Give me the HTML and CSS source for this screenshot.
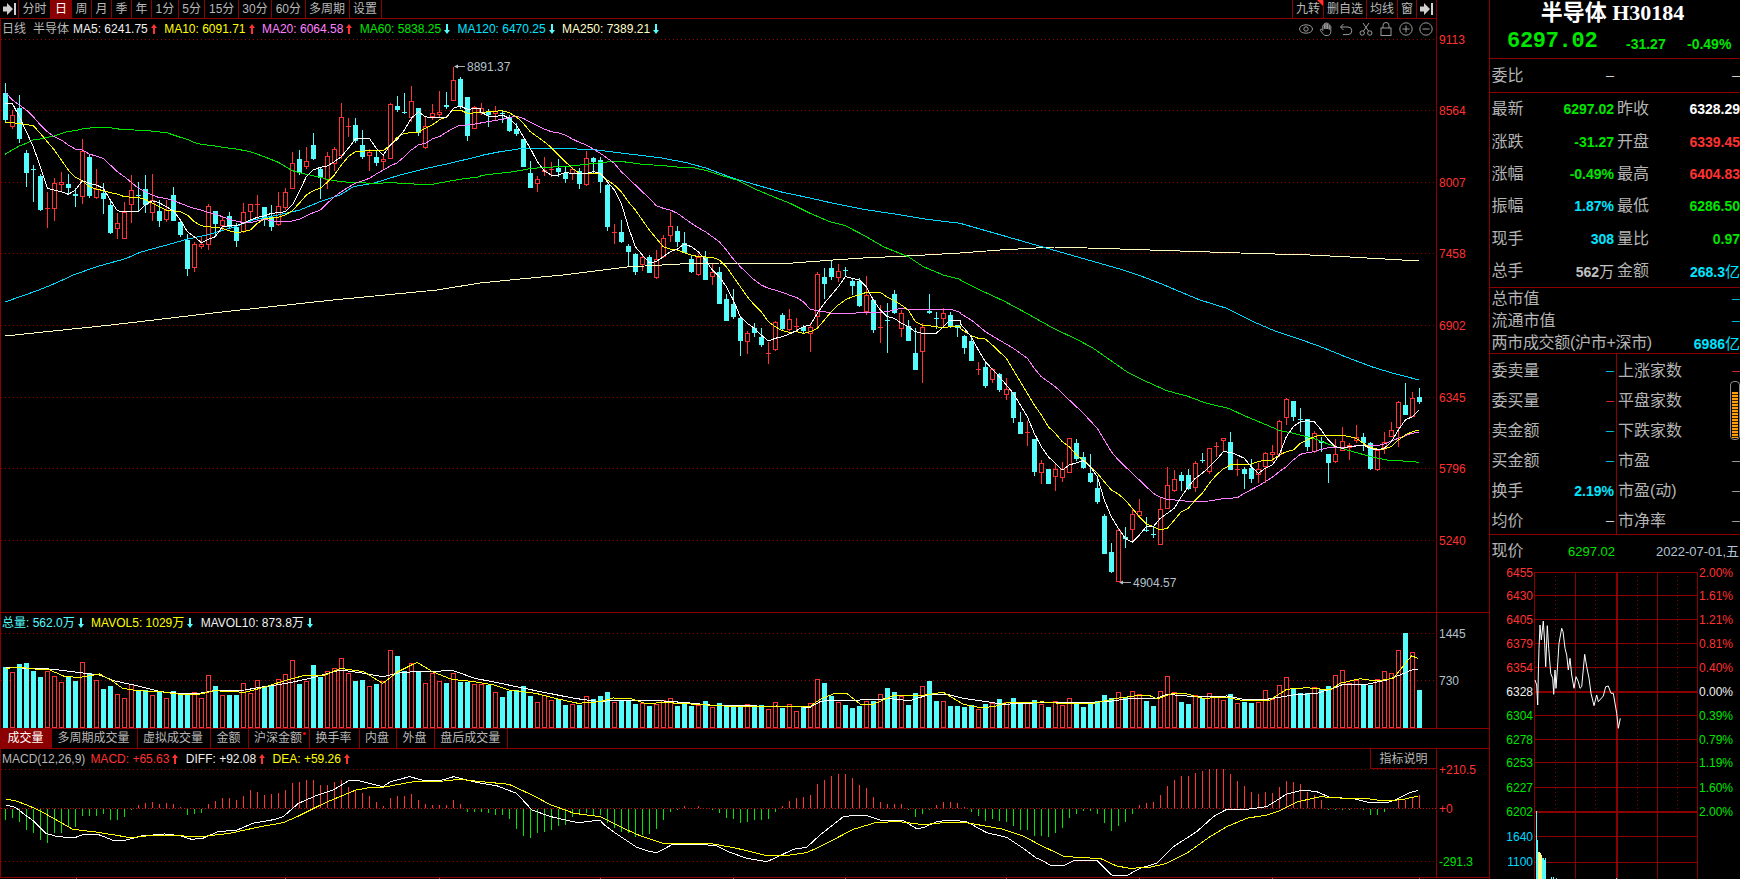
FILE: index.html
```html
<!DOCTYPE html>
<html lang="zh-CN">
<head>
<meta charset="utf-8">
<title>半导体 H30184</title>
<link rel="stylesheet" href="styles.css">
</head>
<body>
<svg class="defs" width="0" height="0" aria-hidden="true">
  <symbol id="arr-up" viewBox="0 0 6 10"><path d="M3 0L6 4H4V10H2V4H0Z"/></symbol>
  <symbol id="arr-down" viewBox="0 0 6 10"><path d="M2 0H4V6H6L3 10L0 6H2Z"/></symbol>
  <symbol id="arr-end" viewBox="0 0 13 12"><path d="M0 3.5H4V0L10 6L4 12V8.5H0ZM11 0H13V12H11Z"/></symbol>
</svg>
<div class="app">
  <main class="main">
    <nav class="toolbar">
      <span class="tb-btn tb-icon"><svg class="arr-end"><use href="#arr-end"/></svg></span>
      <span class="tb-btn">分时</span>
      <span class="tb-btn tb-active">日</span>
      <span class="tb-btn">周</span>
      <span class="tb-btn">月</span>
      <span class="tb-btn">季</span>
      <span class="tb-btn">年</span>
      <span class="tb-btn">1分</span>
      <span class="tb-btn">5分</span>
      <span class="tb-btn">15分</span>
      <span class="tb-btn">30分</span>
      <span class="tb-btn">60分</span>
      <span class="tb-btn">多周期</span>
      <span class="tb-btn">设置</span>
      <span class="tb-spacer"></span>
      <span class="tb-btn tb-tight tb-flag">九转</span>
      <span class="tb-btn tb-tight">删自选</span>
      <span class="tb-btn tb-tight">均线</span>
      <span class="tb-btn tb-tight">窗</span>
      <span class="tb-btn tb-icon"><svg class="arr-end"><use href="#arr-end"/></svg></span>
    </nav>

    <section class="pane pane-price">
      <div class="plot">
        <div class="legend">
          <span class="lg lg-grey lg-name">日线</span>
          <span class="lg lg-grey lg-stock">半导体</span>
          <span class="lg lg-white">MA5: 6241.75</span><svg class="arr red"><use href="#arr-up"/></svg>
          <span class="lg lg-yellow">MA10: 6091.71</span><svg class="arr red"><use href="#arr-up"/></svg>
          <span class="lg lg-violet">MA20: 6064.58</span><svg class="arr red"><use href="#arr-up"/></svg>
          <span class="lg lg-green">MA60: 5838.25</span><svg class="arr cyan"><use href="#arr-down"/></svg>
          <span class="lg lg-blue">MA120: 6470.25</span><svg class="arr cyan"><use href="#arr-down"/></svg>
          <span class="lg lg-cream">MA250: 7389.21</span><svg class="arr cyan"><use href="#arr-down"/></svg>
          <div class="tools">
            <svg class="tool" viewBox="0 0 14 14"><ellipse cx="7" cy="7" rx="6.5" ry="4.2"/><circle cx="7" cy="7" r="2.2"/></svg>
            <svg class="tool" viewBox="0 0 14 14"><path d="M3.8 8.5V3.8a.8.8 0 0 1 1.6 0V7M5.4 7V2a.8.8 0 0 1 1.6 0V7M7 7V1.6a.8.8 0 0 1 1.6 0V7M8.6 7V2.6a.8.8 0 0 1 1.6 0V7.5M10.2 7.5V4.4a.8.8 0 0 1 1.6 0V9.5c0 2.6-1.4 4-3.6 4H7c-1.6 0-2.4-.8-3.2-2L1.4 8.4c-.6-1 .7-1.8 1.5-1L3.8 8.5"/></svg>
            <svg class="tool" viewBox="0 0 14 14"><path d="M4.5 2L1.5 5L4.5 8M1.5 5H9a3.8 3.8 0 0 1 0 7.6H4"/></svg>
            <svg class="tool" viewBox="0 0 14 14"><circle cx="3.2" cy="11" r="2.2"/><circle cx="10.8" cy="11" r="2.2"/><path d="M4.4 9.2L10 1M9.6 9.2L4 1"/></svg>
            <svg class="tool" viewBox="0 0 14 14"><rect x="2" y="6" width="10" height="7.5"/><path d="M4 6V3.5a3 3 0 0 1 6 0V6"/></svg>
            <svg class="tool" viewBox="0 0 14 14"><circle cx="7" cy="7" r="6.2"/><path d="M7 3.5V10.5M3.5 7H10.5"/></svg>
            <svg class="tool" viewBox="0 0 14 14"><circle cx="7" cy="7" r="6.2"/><path d="M3.5 7H10.5"/></svg>
          </div>
        </div>
        <svg id="main-plot" class="chart" width="1435" height="573" viewBox="1 39 1435 573"></svg>
      </div>
      <svg id="main-axis" class="axis" width="52" height="593" viewBox="1437 19 52 593"></svg>
    </section>

    <section class="pane pane-vol">
      <div class="plot">
        <div class="legend">
          <span class="lg lg-cyan">总量: 562.0万</span><svg class="arr cyan"><use href="#arr-down"/></svg>
          <span class="lg lg-yellow">MAVOL5: 1029万</span><svg class="arr cyan"><use href="#arr-down"/></svg>
          <span class="lg lg-white">MAVOL10: 873.8万</span><svg class="arr cyan"><use href="#arr-down"/></svg>
        </div>
        <svg id="vol-plot" class="chart" width="1435" height="96" viewBox="1 632 1435 96"></svg>
      </div>
      <svg id="vol-axis" class="axis" width="52" height="115" viewBox="1437 613 52 115"></svg>
    </section>

    <nav class="tabs">
      <span class="tab tab-active">成交量</span>
      <span class="tab">多周期成交量</span>
      <span class="tab">虚拟成交量</span>
      <span class="tab">金额</span>
      <span class="tab tab-dot">沪深金额</span>
      <span class="tab">换手率</span>
      <span class="tab">内盘</span>
      <span class="tab">外盘</span>
      <span class="tab">盘后成交量</span>
    </nav>

    <section class="pane pane-macd">
      <div class="plot">
        <div class="legend">
          <span class="lg lg-grey lg-macd">MACD(12,26,9)</span>
          <span class="lg lg-red">MACD: +65.63</span><svg class="arr red"><use href="#arr-up"/></svg>
          <span class="lg lg-white">DIFF: +92.08</span><svg class="arr red"><use href="#arr-up"/></svg>
          <span class="lg lg-yellow">DEA: +59.26</span><svg class="arr red"><use href="#arr-up"/></svg>
          <span class="hint">指标说明</span>
        </div>
        <svg id="macd-plot" class="chart" width="1435" height="108" viewBox="1 768 1435 108"></svg>
      </div>
      <svg id="macd-axis" class="axis" width="52" height="128" viewBox="1437 749 52 128"></svg>
    </section>
    <svg id="time-ticks" class="ticks" width="1489" height="1" viewBox="0 878 1489 1"></svg>
  </main>

  <aside class="side">
    <header class="head">
      <h1 class="name">半导体 H30184</h1>
      <div class="price-row">
        <span class="price">6297.02</span>
        <span class="chg chg-a">-31.27</span>
        <span class="chg chg-b">-0.49%</span>
      </div>
    </header>

    <div class="wei">
      <span class="lbl wei-label">委比</span>
      <span class="dash wei-a">—</span>
      <span class="dash wei-b">—</span>
    </div>

    <div class="quotes">
      <span class="lbl">最新</span><span class="val v-green">6297.02</span><span class="lbl">昨收</span><span class="val v-white">6328.29</span>
      <span class="lbl">涨跌</span><span class="val v-green">-31.27</span><span class="lbl">开盘</span><span class="val v-red">6339.45</span>
      <span class="lbl">涨幅</span><span class="val v-green">-0.49%</span><span class="lbl">最高</span><span class="val v-red">6404.83</span>
      <span class="lbl">振幅</span><span class="val v-cyan">1.87%</span><span class="lbl">最低</span><span class="val v-green">6286.50</span>
      <span class="lbl">现手</span><span class="val v-cyan">308</span><span class="lbl">量比</span><span class="val v-green">0.97</span>
      <span class="lbl">总手</span><span class="val v-grey">562<small>万</small></span><span class="lbl">金额</span><span class="val v-cyan">268.3<small>亿</small></span>
    </div>

    <div class="market">
      <div class="m-row"><span class="lbl">总市值</span><span class="dash v-cyan">—</span></div>
      <div class="m-row"><span class="lbl">流通市值</span><span class="dash v-cyan">—</span></div>
      <div class="m-row"><span class="lbl lbl-tight">两市成交额(沪市+深市)</span><span class="val v-cyan">6986<small>亿</small></span></div>
    </div>

    <div class="split">
      <div class="col col-l">
        <div class="m-row"><span class="lbl">委卖量</span><span class="dash v-cyan">—</span></div>
        <div class="m-row"><span class="lbl">委买量</span><span class="dash v-red">—</span></div>
        <div class="m-row"><span class="lbl">卖金额</span><span class="dash v-cyan">—</span></div>
        <div class="m-row"><span class="lbl">买金额</span><span class="dash v-cyan">—</span></div>
        <div class="m-row"><span class="lbl">换手</span><span class="val v-cyan">2.19%</span></div>
        <div class="m-row"><span class="lbl">均价</span><span class="dash v-white">—</span></div>
      </div>
      <div class="col col-r">
        <div class="m-row"><span class="lbl">上涨家数</span><span class="dash v-red">—</span></div>
        <div class="m-row"><span class="lbl">平盘家数</span><span class="dash v-white">—</span></div>
        <div class="m-row"><span class="lbl">下跌家数</span><span class="dash v-green">—</span></div>
        <div class="m-row"><span class="lbl">市盈</span><span class="dash v-grey">—</span></div>
        <div class="m-row"><span class="lbl">市盈(动)</span><span class="dash v-grey">—</span></div>
        <div class="m-row"><span class="lbl">市净率</span><span class="dash v-grey">—</span></div>
        <div class="slider"><div class="slider-fill"></div></div>
      </div>
    </div>

    <div class="now">
      <span class="lbl">现价</span>
      <span class="now-price">6297.02</span>
      <span class="now-date">2022-07-01,五</span>
    </div>
    <svg id="mini-chart" class="mini" width="250" height="312" viewBox="1490 567 250 312"></svg>
  </aside>
</div>
<script src="chart.js"></script>
</body>
</html>
```
FILE: styles.css
```css
* { box-sizing: border-box; margin: 0; padding: 0; }
html, body { width: 1740px; height: 879px; overflow: hidden; background: #000; }
body { font: 12px/1 "Liberation Sans", "Noto Sans CJK SC", sans-serif; color: #b8b8b8; }
.defs { position: absolute; }
.app { display: flex; width: 1740px; height: 879px; }

.main { width: 1490px; flex: none; border-right: 1px solid #8b0000; display: flex; flex-direction: column; }

.toolbar { width: 1437px; height: 19px; display: flex; border-bottom: 1px solid #8b0000; border-right: 1px solid #8b0000; }
.tb-btn { display: flex; align-items: center; justify-content: center; padding: 0 3.5px 1px; border-right: 1px solid #8b0000; color: #b8b8b8; white-space: nowrap; }
.toolbar .tb-btn:last-child { border-right: 0; }
.tb-icon { width: 19px; padding: 0; }
.tb-tight { padding: 0 3px 1px; }
.tb-active { background: #8b0000; color: #fff; padding: 0 4px 1px; }
.tb-spacer { flex: 1; border-right: 1px solid #8b0000; }
.tb-flag { position: relative; }
.tb-flag::after { content: ""; position: absolute; top: 0; right: 0; border-top: 6px solid #ff3232; border-left: 6px solid transparent; }
.arr-end { width: 13px; height: 12px; fill: #d0d0d0; }

.pane { display: flex; border-bottom: 1px solid #8b0000; }
.pane-price { height: 594px; }
.pane-vol { height: 116px; }
.pane-macd { height: 129px; }
.plot { width: 1437px; flex: none; display: flex; flex-direction: column; border-left: 1px solid #8b0000; border-right: 1px solid #8b0000; }
.chart, .axis, .mini, .ticks { display: block; flex: none; }

.legend { height: 20px; display: flex; align-items: center; padding-left: 1px; position: relative; white-space: nowrap; }
.pane-vol .legend { height: 19px; }
.pane-macd .legend { height: 19px; }
.lg { margin-right: 3px; }
.lg-name { margin-right: 7px; }
.lg-stock { margin-right: 4px; }
.lg-macd { margin-right: 5px; }
.arr { width: 6px; height: 10px; margin-right: 7.4px; flex: none; }
.arr.red { fill: #ff3232; }
.arr.cyan { fill: #54fcfc; }
.lg-grey { color: #b8b8b8; }
.lg-white { color: #f0f0f0; }
.lg-yellow { color: #ffff00; }
.lg-violet { color: #ff80ff; }
.lg-green { color: #00e600; }
.lg-blue { color: #00e5ff; }
.lg-cream { color: #ffffc8; }
.lg-cyan { color: #54fcfc; }
.lg-red { color: #ff3232; }

.tools { position: absolute; right: 3px; top: 3px; display: flex; gap: 6px; }
.tool { width: 14px; height: 14px; fill: none; stroke: #9c9c9c; stroke-width: 1; }

.hint { position: absolute; top: 0; right: 0; height: 20px; width: 66px; display: flex; align-items: center; justify-content: center; border-left: 1px solid #8b0000; border-bottom: 1px solid #8b0000; color: #b8b8b8; }

.tabs { height: 20px; display: flex; border-bottom: 1px solid #8b0000; }
.tab { display: flex; align-items: center; padding: 0 7px 1px 5.5px; border-right: 1px solid #8b0000; color: #b8b8b8; position: relative; white-space: nowrap; }
.tab-active { background: #8b0000; color: #fff; padding: 0 7.5px 1px; }
.tab-dot::after { content: ""; position: absolute; top: 3px; right: 3px; width: 3px; height: 3px; border-radius: 50%; background: #ff0000; }

/* chart classes */
.fill-up { fill: #ff3232; }
.fill-down { fill: #54fcfc; }
.fill-green { fill: #00e600; }
.hollow { fill: #000; stroke: #ff3232; stroke-width: 1; }
.crisp { shape-rendering: crispEdges; }
.grid { stroke: #9a0000; stroke-width: 1; stroke-dasharray: 1 3; shape-rendering: crispEdges; }
.grid-zero { stroke: #e00000; stroke-width: 1; stroke-dasharray: 1 2; shape-rendering: crispEdges; }
.ln { fill: none; stroke-width: 1; shape-rendering: crispEdges; }
.ln-white { stroke: #fff; }
.ln-yellow { stroke: #ffff00; }
.ln-violet { stroke: #ff80ff; }
.ln-green { stroke: #00e600; }
.ln-blue { stroke: #00d8ff; }
.ln-cream { stroke: #ffffc0; }
.ln-mark { stroke: #a8a8a8; }
.txt { font: 12px "Liberation Sans", sans-serif; dominant-baseline: central; }
.t-red { fill: #ff3232; }
.t-green { fill: #00e600; }
.t-white { fill: #f0f0f0; }
.t-grey { fill: #b4c0cc; }
.t-cyan { fill: #00d8ff; }
.m-line { stroke: #8b0000; stroke-width: 1; shape-rendering: crispEdges; }
.m-thick { stroke: #8b0000; stroke-width: 2; shape-rendering: crispEdges; }
.m-dot { stroke: #8b0000; stroke-width: 1; stroke-dasharray: 1 3; shape-rendering: crispEdges; }
.m-price { fill: none; stroke: #fff; stroke-width: 1; }
.m-vol { stroke: #54fcfc; stroke-width: 1; shape-rendering: crispEdges; }
.m-vol-y { stroke: #ffff90; stroke-width: 1; shape-rendering: crispEdges; }

/* side panel */
.side { flex: 1; min-width: 0; display: flex; flex-direction: column; overflow: hidden; }
.head { height: 59px; border-bottom: 1px solid #8b0000; }
.name { height: 25px; padding-top: 1px; text-align: center; font: 700 22px/24px "Liberation Serif", "Noto Sans CJK SC", serif; color: #fff; padding-right: 5px; }
.price-row { display: flex; align-items: center; height: 33px; position: relative; }
.price { margin-left: 17px; font: 700 22px/1 "Liberation Mono", monospace; letter-spacing: -.3px; color: #00e600; }
.chg { font: 700 14px/1 "Liberation Sans", sans-serif; color: #00e600; position: absolute; top: 12px; }
.chg-a { left: 136px; }
.chg-b { left: 197px; }

.lbl { font-size: 16px; line-height: 1; color: #b4b4b4; white-space: nowrap; }
.lbl-tight { letter-spacing: -.3px; }
.val { font: 700 14px/1 "Liberation Sans", "Noto Sans CJK SC", sans-serif; text-align: right; white-space: nowrap; }
.val small { font-size: 15px; font-weight: 400; }
.dash { font: 700 8px/1 "Liberation Sans", sans-serif; }
.v-green { color: #00e600; }
.v-red { color: #ff3232; }
.v-white { color: #fff; }
.v-cyan { color: #00e5ff; }
.v-grey { color: #c0c0c0; }

.wei { height: 34px; border-bottom: 1px solid #8b0000; display: flex; align-items: center; padding-left: 1.5px; position: relative; }
.wei-a, .wei-b { position: absolute; top: 13px; color: #fff; }
.wei-a { left: 116px; }
.wei-b { right: 0; }

.quotes { height: 195px; border-bottom: 1px solid #8b0000; display: grid; grid-template-columns: 41.5px 81px 36px 90px; grid-auto-rows: 32.4px; padding-left: 1.5px; align-items: center; }
.quotes .lbl:nth-child(4n+3) { margin-left: 3px; }

.market { height: 66px; border-bottom: 1px solid #8b0000; display: grid; grid-auto-rows: 22px; padding: 0 0 0 1.5px; }
.m-row { display: flex; align-items: center; justify-content: space-between; }

.split { height: 181px; border-bottom: 1px solid #8b0000; display: flex; padding-top: 2px; position: relative; }
.col { display: grid; grid-auto-rows: 30px; }
.col-l { width: 127px; border-right: 1px solid #8b0000; padding: 2px 2px 0 1.5px; margin-top: -2px; }
.col-r { flex: 1; padding-left: 1px; }
.slider { position: absolute; left: 240px; top: 27px; width: 10px; height: 59px; border: 1px solid #8a8a8a; border-radius: 4px; background: #000; padding: 10px 1px 1px; }
.slider-fill { height: 100%; background: repeating-linear-gradient(#ff9d0a 0 2px, #3a2000 2px 3px); }

.now { height: 32px; display: flex; align-items: center; padding-left: 1.5px; position: relative; }
.now-price { position: absolute; left: 78px; font-size: 13px; color: #00e600; }
.now-date { position: absolute; left: 166px; font-size: 13px; color: #b4c4d4; white-space: nowrap; }
```
FILE: chart.js
```js
const NS = 'http://www.w3.org/2000/svg';
function add(svg, tag, attrs, text) {
  const el = document.createElementNS(NS, tag);
  for (const k in attrs) el.setAttribute(k, attrs[k]);
  if (text !== undefined) el.textContent = text;
  svg.appendChild(el);
  return el;
}
function seg(x0, y0, sx, str) {
  return str.trim().split(/\s+/).map(p => {
    const [a, b] = p.split(',').map(Number);
    return [x0 + a / sx, y0 + b / 3];
  });
}
function poly(svg, cls, pts) {
  add(svg, 'polyline', { class: 'ln ' + cls, points: pts.map(p => p[0].toFixed(1) + ',' + p[1].toFixed(1)).join(' ') });
}
const $ = id => document.getElementById(id);
const xOf = i => 5 + 7 * i;

/* ---- candles: type hi top bot lo, in 3x units from each y origin ---- */
const candleGroups = [
  [60, `c 68 98 180 185|r 150 165 200 207|c 105 145 237 248|c 270 279 339 380|c 315 327 330 425|c 342 348 450 452|r 396 445 448 503|r 355 370 448 483|r 335 365 376 392|c 343 372 384 405|c 383 402 408 440|r 238 274 410 432|c 285 291 408 415|r 327 387 413 418|c 370 399 417 462|c 420 435 520 522|r 460 490 508 537|r 427 456 536 538|r 346 390 434 490|c 365 405 409 455|c 345 388 434 460|r 342 421 458 483|c 420 453 483 500|r 420 450 480 485|c 380 406 483 483|c 478 486 526 530|c 522 539 627 648|r 545 552 624 636|r 530 553 560 567|r 433 439 554 570|c 452 453 492 530|r 470 481 497 510|c 456 468 500 505|c 490 502 543 560|r 428 455 516 518|r 432 433 455 490|r 405 433 435 478|c 440 441 480 498|c 435 472 500 513|r 397 439 494 497|r 385 397 445 450|r 275 310 386 388|c 270 297 340 345|r 262 304 320 327|c 220 255 297 300|c 322 327 355 417|r 275 289 360 387|r 262 268 311 333|r 130 172 289 296|r 175 198 200 230|c 175 195 242 248|c 210 255 290 297|r 268 275 287 333|c 270 291 309 318|r 282 296 307 330|r 130 132 296 296|c 108 138 150 156|c 98 156 160 162|r 78 124 175 186|c 144 144 220 228|r 170 199 263 268|r 132 160 172 180|r 93 157 166 175|c 95 135 140 148|r 20 60 122 122|c 52 57 138 148|c 112 112 228 242|r 137 140 206 207`],
  [60, `r 130 145 158 165|c 148 156 166 200|r 138 153 163 183|c 150 158 162 190|c 165 175 213 216|c 190 207 222 228|c 237 237 321 321|c 303 339 384 384|r 348 357 373 395|r 291 330 336 347|r 305 328 331 350|c 297 323 336 350|c 318 338 356 368|r 320 328 342 360|c 325 332 372 386|r 274 295 375 377|c 292 294 305 340|c 292 300 366 400|c 372 374 500 512|r 492 516 519 552|c 480 516 546 548|c 552 558 576 622|c 578 582 636 645|r 583 592 614 633|c 585 590 640 640|r 570 598 654 656|r 525 535 590 595|r 455 499 527 545|c 498 514 546 560|c 515 548 578 580|c 585 598 636 640|r 582 592 646 648|c 574 590 659 660|r 610 636 650 675|c 622 636 732 732|c 702 717 782 782|c 687 733 772 778|c 772 774 844 887|r 812 820 845 882|c 790 804 819 832|c 805 832 856 862|r 845 880 883 912|r 782 785 870 872|c 760 766 808 810|r 747 776 810 812|r 775 797 800 815|c 795 800 813 820|r 790 802 823 876|r 635 643 770 800|c 625 652 671 718|c 601 625 650 660|r 612 634 653 666|c 620 630 634 650|c 655 664 678 705|c 655 662 738 742|r 648 706 756 764|c 718 720 810 818|r 735 800 803 849|c 730 779 782 878|c 690 702 760 762|r 750 760 808 830|c 780 797 843 843|c 805 879 930 930|r 790 802 875 969|c 702 752 758 762|c 757 774 777 806|r 745 760 778 798|c 755 766 800 805|c 795 795 803 830`],
  [270, `c 195 197 234 252|c 195 213 273 273|r 276 297 301 316|c 280 291 348 353|r 295 297 330 338|c 310 312 360 365|r 325 358 374 390|c 365 366 445 458|c 427 456 491 492|r 454 486 489 527|c 508 508 606 617|r 570 580 610 641|c 597 598 641 641|r 580 598 620 662|r 576 598 623 635|r 505 505 608 610|c 508 520 568 572|c 546 562 594 597|c 552 609 636 640|c 628 655 696 702|c 732 737 851 851|c 820 846 906 910|r 778 779 935 937|c 770 800 808 833|r 716 733 781 815|r 687 722 737 744|c 742 779 782 786|c 770 791 794 804|r 682 718 824 826|r 591 646 716 718|r 600 628 662 665|c 605 616 632 664|c 597 616 658 660|r 574 580 655 665|c 549 570 573 580|r 535 535 607 613|r 515 528 531 562|r 503 505 513 545|c 487 516 599 600|r 568 596 599 618|c 590 598 612 656|c 568 594 627 640|r 578 596 616 640|r 547 548 590 638|r 526 547 556 575|r 450 454 555 560|r 385 388 445 465|c 393 394 441 452|c 415 448 451 485|c 447 448 530 543|r 484 488 547 548|c 500 513 520 545|c 551 553 578 640|r 508 551 577 578|r 472 512 542 543|r 520 526 533 570|r 465 500 513 520|c 490 502 518 544|c 516 520 598 600|r 540 541 601 602|r 487 516 535 552|r 457 479 500 500|r 392 397 475 530|c 340 406 434 435|r 367 385 440 442|c 355 381 396 402`]
];

/* moving averages */
const mainLines = {
  'ln-cream': [[5,336],[111,325],[222,312],[333,300],[437,290],[480,283],[520,279],[563,275],[603,270],[627,267],[680,264],[720,263],[793,263],[833,260],[863,258],[907,256],[960,253],[1000,250],[1054,247],[1120,249],[1180,251],[1240,253],[1310,255],[1350,257],[1419,261]],
  'ln-blue': [[5,302],...seg(0,60,3,'117,690 170,668 220,645 290,620 380,595 420,577 500,555 560,538 620,525 700,502 760,480 820,468 900,450 960,425 1020,405 1060,380 1120,370 1200,345 1280,325 1350,310 1440,288'),
    ...seg(480,60,3,'0,287 60,275 130,265 200,265 290,267 350,270 430,280 540,293 620,308 680,325 760,355 840,378 900,395 980,412 1060,430 1150,448 1250,463 1340,478 1440,490'),
    ...seg(960,270,3,'0,-118 490,0 540,17 600,40 660,65 720,90 800,115 880,155 950,185 1020,208 1090,233 1160,262 1240,292 1300,310 1378,330').slice(1)],
  'ln-green': [...seg(0,60,3,'15,283 37,270 58,258 79,250 100,240 121,237 142,232 163,228 205,214 226,212 247,207 289,202 331,203 361,208 403,210 445,212 500,218 541,232 562,238 583,248 604,253 646,258 667,262 709,267 751,275 793,290 835,307 877,332 919,343 961,352 982,358 1024,365 1066,368 1129,370 1171,368 1213,370 1255,373 1297,373 1339,365 1381,358 1440,350'),
    ...seg(480,60,3,'0,347 40,342 100,335 145,327 190,322 250,320 320,313 390,305 430,305 480,312 560,318 600,322 640,323 680,332 720,345 770,360 820,385 880,410 930,430 990,460 1050,485 1096,497 1150,525 1210,560 1285,590 1330,620 1390,645 1440,658'),
    ...seg(960,270,3,'0,30 60,60 130,92 200,130 280,175 350,208 400,235 450,270 500,305 560,335 620,362 680,378 740,400 805,415 860,440 920,465 960,482 1000,490 1060,505 1120,528 1180,545 1240,562 1285,571 1330,573 1378,577')],
  'ln-violet': [...seg(0,60,3,'15,95 37,120 58,135 79,150 100,170 121,195 142,215 163,230 184,240 205,255 226,267 247,270 268,282 310,295 331,315 352,335 373,350 394,367 415,385 436,395 457,405 478,413 499,415 520,422 541,430 562,438 583,445 604,450 625,457 646,462 667,470 688,478 709,483 730,488 751,488 772,483 793,478 814,482 835,485 856,483 877,483 898,478 919,467 940,458 961,450 982,430 1003,410 1024,395 1045,382 1066,370 1087,363 1108,355 1129,342 1150,330 1171,318 1192,308 1213,290 1234,270 1255,255 1276,250 1297,237 1318,230 1339,217 1360,205 1381,195 1402,195 1440,190'),
    ...seg(480,60,3,'0,188 25,185 67,178 109,168 130,175 151,187 172,197 193,207 214,215 235,218 256,225 277,237 298,247 319,255 340,267 361,280 382,295 403,310 424,335 445,355 466,375 487,395 508,415 529,437 550,445 571,450 592,460 613,475 634,490 655,503 676,515 697,530 718,545 739,570 760,597 781,620 802,640 823,660 844,675 865,685 886,690 907,697 928,705 949,712 970,725 991,748 1012,752 1033,755 1054,760 1117,760 1159,757 1201,757 1222,755 1243,750 1264,745 1285,748 1348,750 1411,748 1440,757'),
    ...seg(960,270,3,'0,130 34,150 55,167 76,185 118,210 160,235 202,265 223,295 244,320 286,350 328,390 370,430 412,475 433,510 454,545 475,570 496,590 517,610 538,630 559,650 580,670 601,682 622,688 685,694 748,693 790,686 832,683 853,670 895,648 937,622 958,605 979,590 1000,570 1021,553 1042,548 1063,545 1084,538 1105,533 1147,533 1189,527 1210,527 1252,527 1273,522 1294,513 1315,505 1336,497 1357,490 1378,487')],
  'ln-yellow': [...seg(0,60,3,'15,187 58,190 100,197 121,220 142,245 163,270 184,300 205,330 226,352 247,362 268,380 289,387 310,392 331,398 352,402 373,410 415,413 436,418 457,430 478,440 499,450 541,455 562,465 583,485 604,497 625,500 667,505 688,512 709,518 730,515 751,510 772,490 793,477 835,472 856,465 877,452 898,430 919,405 940,392 961,385 982,367 1003,345 1024,315 1045,290 1066,275 1108,272 1150,272 1171,255 1192,232 1213,220 1255,217 1276,205 1297,195 1318,180 1339,170 1360,150 1381,150 1402,160 1440,158'),
    ...seg(480,60,3,'0,158 25,155 67,152 88,158 109,170 130,190 151,215 172,230 193,245 214,263 235,285 256,305 277,325 298,340 361,342 382,360 403,375 424,395 445,425 466,450 487,480 508,510 529,535 550,560 571,567 592,570 613,578 634,585 655,590 697,592 718,600 739,620 760,650 781,680 802,710 823,735 844,755 865,785 886,800 907,812 928,817 949,815 970,820 991,815 1012,805 1033,780 1054,755 1075,735 1096,720 1117,710 1138,705 1159,697 1201,697 1222,712 1243,722 1264,735 1285,750 1306,785 1327,795 1348,797 1369,800 1390,803 1411,800 1440,800'),
    ...seg(960,270,3,'0,175 34,197 55,205 76,207 97,225 118,245 139,265 160,300 181,335 202,370 223,405 244,435 265,470 286,490 307,515 328,530 349,555 370,570 391,590 412,610 433,635 454,660 475,672 496,690 517,715 538,740 559,762 580,770 601,780 622,775 643,750 664,725 685,715 706,690 727,670 748,640 769,615 790,597 811,585 853,582 874,582 895,575 916,570 937,570 958,555 979,545 1000,540 1021,520 1042,510 1063,500 1084,495 1147,495 1168,500 1189,505 1210,520 1231,532 1252,537 1273,537 1294,530 1315,510 1336,495 1357,485 1378,480')],
  'ln-white': [...seg(0,60,3,'15,130 37,130 58,170 79,215 100,260 121,320 142,385 163,390 184,395 205,403 226,390 247,362 268,370 289,375 310,385 331,420 352,452 373,455 415,455 436,435 457,422 478,428 499,440 520,452 541,480 562,515 583,530 604,548 625,538 646,530 667,500 688,497 709,497 730,490 751,480 772,472 793,468 814,460 835,458 856,455 877,435 898,395 919,350 940,330 961,322 982,318 1003,305 1024,290 1045,265 1066,237 1108,235 1129,265 1150,285 1171,255 1192,238 1213,210 1234,175 1255,155 1276,170 1297,173 1339,173 1360,145 1381,138 1402,148 1440,145'),
    ...seg(480,60,3,'0,155 25,168 46,170 67,165 88,175 109,195 130,230 151,265 172,305 193,333 214,345 235,345 256,338 277,340 298,342 319,340 340,335 361,340 382,365 403,390 424,430 445,500 466,560 487,585 508,608 529,605 550,590 571,575 592,568 613,552 634,560 655,575 676,600 697,630 718,650 739,680 760,720 781,770 802,790 823,805 844,825 865,843 886,835 907,830 928,822 949,812 970,800 991,795 1012,760 1033,730 1054,705 1075,680 1096,650 1117,655 1138,660 1159,680 1180,720 1201,750 1222,770 1243,775 1264,790 1285,800 1306,815 1327,820 1348,820 1369,820 1390,800 1411,780 1440,780'),
    ...seg(960,270,3,'0,160 34,200 55,240 76,275 118,320 160,370 181,405 202,440 223,490 244,530 265,560 286,580 307,600 328,585 370,572 391,590 412,620 433,690 454,740 475,775 496,805 517,817 538,795 559,770 580,770 601,745 622,730 643,715 664,680 685,650 706,625 727,610 748,590 769,570 790,545 811,547 832,555 853,565 874,590 895,610 916,595 937,585 958,555 979,500 1000,470 1021,455 1042,452 1063,455 1084,480 1105,510 1126,530 1147,535 1168,530 1189,528 1210,525 1231,535 1252,540 1273,535 1294,515 1315,480 1336,450 1357,440 1378,420')]
};

/* volume: type + top (3x units from y=600) */
const volBars = ('c200 r216 c192 c189 c212 c230 r213 r229 r246 c232 c243 r187 c220 r240 c267 c258 r283 r295 r252 c270 c270 r285 c275 r294 c273 c280 c282 r277 r294 r226 c258 r285 c285 c285 r250 r280 r240 c258 c256 r238 r223 r181 c252 r243 c195 c232 r214 r205 r175 r220 c243 c240 r259 c252 r243 r151 c168 c213 r190 c213 r250 r220 r243 c249 r220 c246 c246 r252 r252 c255 r276 c291 c272 c270 c258 c288 r306 r285 r300 c297 c315 r312 c315 r289 ' +
  'c297 c288 c276 r306 c300 c300 c312 r309 c318 r311 r301 r295 c318 c312 c318 r315 c303 r321 c309 c315 c321 c318 r312 c318 c315 r327 r307 c323 r313 r333 c321 r310 r238 c249 c288 r306 c315 c324 c318 r304 c303 r283 c264 c276 r289 c315 c279 r258 c243 c303 r304 c318 c318 c321 c316 r327 c312 r309 c297 r307 c294 c309 r310 c300 ' +
  'r312 c320 r304 r315 r295 c310 c320 c310 c303 c285 c294 r277 c292 r273 r283 c303 c318 r273 r229 r277 c306 c312 r285 c294 r280 r288 r300 c282 r310 c306 c309 r306 r271 r296 r256 r232 c265 c279 c279 r262 c268 c258 r226 r211 r250 r240 c253 c255 r238 r213 r219 r151 c99 r157 c270').split(' ');

const volWhite = [...seg(0,600,2.613,'15,203 100,205 140,208 210,218 260,225 300,243 350,255 420,275 470,280 520,280 560,272 640,270 680,262 750,250 810,235 890,210 950,220 1000,230 1050,217 1120,214 1185,212 1240,235 1300,248 1400,272 1500,295 1568,305'),
  ...seg(590,600,3,'60,302 210,302 290,308 360,315 440,315 500,318 560,318 660,322 690,305 720,300 810,300 900,296 960,302 1020,283 1070,283 1120,295 1190,305 1240,313 1350,308'),
  ...seg(1040,600,3,'0,308 120,308 200,305 260,297 350,295 380,283 440,288 490,290 560,288 610,298 680,298 760,285 830,280 880,265 910,253 980,253 1040,240 1080,225 1120,208 1135,210')];
const volYellow = [...seg(0,600,2.613,'15,205 50,202 100,208 130,210 170,230 210,232 260,222 290,240 320,265 360,272 420,275 470,283 520,283 560,272 640,277 690,262 750,240 800,225 850,225 890,205 950,215 1000,250 1040,215 1090,187 1130,215 1180,238 1240,245 1290,255 1330,270 1400,280 1450,295 1510,310 1568,305'),
  ...seg(590,600,3,'70,294 125,297 165,310 230,308 270,310 350,315 440,320 560,318 660,320 690,298 730,282 770,280 810,312 850,313 910,287 990,287 1060,277 1120,313 1170,323 1210,320 1250,308 1350,308'),
  ...seg(1040,600,3,'0,305 60,310 160,310 230,295 290,287 330,287 350,297 400,280 440,282 490,295 560,292 610,302 690,300 740,268 800,263 870,270 900,250 960,236 1010,243 1060,235 1115,167 1135,176')];

/* MACD bar ends, 3x units from y=600; the zero line sits at 625 */
const macdBars = [660,655,665,690,700,720,728,700,700,680,680,648,648,648,642,660,660,650,628,615,610,606,612,610,612,622,645,642,640,612,603,595,595,600,587,570,575,585,582,578,570,548,545,540,540,555,555,545,540,560,570,578,588,605,618,595,588,588,582,600,612,615,616,615,600,612,635,635,635,640,645,645,658,688,708,714,700,695,690,678,675,650,640,640,
  645,645,668,683,695,700,710,705,702,687,660,636,628,618,624,618,625,628,638,654,656,668,666,660,660,657,635,618,603,594,591,585,552,540,528,522,522,534,555,564,590,606,612,612,612,628,651,642,628,615,606,606,609,622,636,648,663,657,663,666,678,690,690,708,708,711,
  700,684,655,642,633,632,642,668,692,677,665,642,615,608,605,585,558,540,528,528,520,512,507,507,507,522,543,557,575,582,575,578,560,543,547,552,575,585,600,628,628,628,628,625,628,644,645,636,625,600,600,590,585];

const macdWhite = [...seg(0,600,2.613,'15,615 40,622 60,640 90,665 120,700 150,710 195,713 220,703 260,705 300,723 330,720 370,708 430,702 470,707 500,718 530,715 570,695 620,690 660,670 720,658 740,650 780,610 830,585 870,570 910,543 930,540 1000,560 1020,545 1070,530 1110,542 1150,542 1185,530 1250,548 1300,558 1350,580 1390,630 1440,650 1510,668 1568,660'),
  ...seg(590,600,3,'40,672 70,695 100,715 140,742 170,752 200,758 250,732 330,732 380,738 420,757 470,775 530,785 560,772 610,748 650,742 690,705 760,650 800,645 830,647 870,660 940,662 980,686 1000,683 1040,665 1080,660 1130,665 1190,698 1250,712 1300,745 1340,775'),
  ...seg(1040,600,3,'0,778 30,795 70,797 100,783 170,780 215,825 260,827 300,805 350,790 400,740 470,695 520,650 560,628 620,628 680,620 740,582 790,570 830,575 870,592 940,596 990,608 1040,608 1070,598 1110,578 1135,571')];
const macdYellow = [...seg(0,600,2.613,'15,598 40,602 70,615 100,630 140,655 190,688 250,696 300,705 340,713 400,706 470,707 520,711 600,700 680,680 740,668 780,648 850,608 930,570 960,564 1000,562 1080,545 1160,543 1200,538 1240,543 1330,553 1390,585 1440,615 1500,640 1568,650'),
  ...seg(590,600,3,'40,655 90,680 150,707 220,730 370,732 440,745 530,767 600,765 650,758 700,735 790,688 860,667 930,665 1000,674 1070,667 1130,668 1240,688 1300,708 1350,735'),
  ...seg(1040,600,3,'0,735 70,768 120,773 180,775 230,798 270,805 330,802 380,790 440,760 510,710 560,680 620,655 680,645 720,632 770,606 840,590 900,594 970,594 1010,600 1050,602 1090,598 1135,588')];

function hgrid(svg, y, cls) {
  add(svg, 'line', { class: cls || 'grid', x1: 1, x2: 1436, y1: y + .5, y2: y + .5 });
}
function axisLabels(svg, items) {
  items.forEach(([t, y, cls, x]) => add(svg, 'text', { class: 'txt ' + cls, x: x || 1439, y: y + .5 }, t));
}

function drawMain() {
  const svg = $('main-plot');
  const rows = [[9113,39],[8564,110],[8007,182],[7458,253],[6902,325],[6345,397],[5796,468],[5240,540]];
  rows.forEach(r => hgrid(svg, r[1]));
  axisLabels($('main-axis'), rows.map(r => [String(r[0]), r[1], 't-red']));

  let i = 0;
  candleGroups.forEach(([y0, str]) => {
    str.split('|').forEach(row => {
      const [type, hi, top, bot, lo] = row.trim().split(' ').map((v, n) => n ? Math.round(y0 + Number(v) / 3) : v);
      const x = xOf(i);
      const up = type === 'r';
      add(svg, 'rect', { class: 'crisp ' + (up ? 'fill-up' : 'fill-down'), x, y: hi, width: 1, height: Math.max(lo - hi, 1) });
      const h = Math.max(bot - top, 1);
      if (!up) add(svg, 'rect', { class: 'crisp fill-down', x: x - 2, y: top, width: 5, height: h });
      else if (h <= 2) add(svg, 'rect', { class: 'crisp fill-up', x: x - 2, y: top, width: 5, height: h });
      else add(svg, 'rect', { class: 'crisp hollow', x: x - 1.5, y: top + .5, width: 4, height: h - 1 });
      i++;
    });
  });

  for (const cls in mainLines) poly(svg, cls, mainLines[cls]);

  add(svg, 'polyline', { class: 'ln ln-mark', points: '455,66.5 465,66.5' });
  add(svg, 'path', { class: 't-grey', d: 'M454 66.5L458 64.5V68.5Z' });
  add(svg, 'text', { class: 'txt t-grey', x: 467, y: 67 }, '8891.37');
  add(svg, 'polyline', { class: 'ln ln-mark', points: '1120,582.5 1131,582.5' });
  add(svg, 'path', { class: 't-grey', d: 'M1119 582.5L1123 580.5V584.5Z' });
  add(svg, 'text', { class: 'txt t-grey', x: 1133, y: 582.5 }, '4904.57');
}

function drawVol() {
  const svg = $('vol-plot');
  hgrid(svg, 633); hgrid(svg, 680);
  volBars.forEach((b, i) => {
    const top = Math.round(600 + Number(b.slice(1)) / 3), x = xOf(i);
    if (b[0] === 'c') add(svg, 'rect', { class: 'crisp fill-down', x: x - 2, y: top, width: 5, height: 728 - top });
    else add(svg, 'rect', { class: 'crisp hollow', x: x - 1.5, y: top + .5, width: 4, height: 727 - top });
  });
  poly(svg, 'ln-white', volWhite);
  poly(svg, 'ln-yellow', volYellow);
  axisLabels($('vol-axis'), [['1445', 633, 't-grey'], ['730', 680, 't-grey']]);
}

function drawMacd() {
  const svg = $('macd-plot');
  hgrid(svg, 769); hgrid(svg, 861);
  macdBars.forEach((v, i) => {
    const y = 600 + v / 3;
    if (v < 625) add(svg, 'rect', { class: 'crisp fill-up', x: xOf(i), y: Math.round(y), width: 1, height: 808 - Math.round(y) });
    else if (v > 625) add(svg, 'rect', { class: 'crisp fill-green', x: xOf(i), y: 809, width: 1, height: Math.max(Math.round(y) - 809, 1) });
  });
  hgrid(svg, 808, 'grid-zero');
  poly(svg, 'ln-white', macdWhite);
  poly(svg, 'ln-yellow', macdYellow);
  axisLabels($('macd-axis'), [['+210.5', 769, 't-red'], ['+0', 808, 't-red'], ['-291.3', 861, 't-green']]);

  const ticks = $('time-ticks');
  [76, 285, 439, 600, 733, 845, 1006, 1139, 1272, 1419].forEach(x =>
    add(ticks, 'rect', { class: 'crisp fill-up', x, y: 878, width: 1, height: 1 }));
}

function drawMini() {
  const svg = $('mini-chart');
  const ys = [572, 595, 619, 643, 667, 691, 715, 739, 762, 787, 811, 836, 862];
  const thick = [691, 811];
  ys.forEach(y => add(svg, 'line', { class: thick.includes(y) ? 'm-thick' : 'm-line', x1: 1534, x2: 1697, y1: y + .5, y2: y + .5 }));
  [1534, 1575, 1657, 1697].forEach(x => add(svg, 'line', { class: 'm-line', x1: x + .5, x2: x + .5, y1: 572, y2: 879 }));
  add(svg, 'line', { class: 'm-thick', x1: 1617, x2: 1617, y1: 572, y2: 879 });
  [1555, 1595, 1637, 1677].forEach(x => add(svg, 'line', { class: 'm-dot', x1: x + .5, x2: x + .5, y1: 572, y2: 811 }));

  const left = ['6455','6430','6405','6379','6354','6328','6304','6278','6253','6227','6202'];
  const right = ['2.00%','1.61%','1.21%','0.81%','0.40%','0.00%','0.39%','0.79%','1.19%','1.60%','2.00%'];
  left.forEach((t, i) => {
    const cls = i < 5 ? 't-red' : i === 5 ? 't-white' : 't-green';
    add(svg, 'text', { class: 'txt ' + cls, x: 1533, y: ys[i] + .5, 'text-anchor': 'end' }, t);
    add(svg, 'text', { class: 'txt ' + cls, x: 1699, y: ys[i] + .5 }, right[i]);
  });
  add(svg, 'text', { class: 'txt t-cyan', x: 1533, y: 836.5, 'text-anchor': 'end' }, '1640');
  add(svg, 'text', { class: 'txt t-cyan', x: 1533, y: 862, 'text-anchor': 'end' }, '1100');

  [[1536,811],[1537,840],[1542,858],[1543,858],[1544,860],[1545,858],[1551,877],[1553,877],[1556,878],[1616,878]].forEach(([x, t]) =>
    add(svg, 'line', { class: 'm-vol', x1: x + .5, x2: x + .5, y1: t, y2: 879 }));
  [[1538,852],[1539,852],[1540,853],[1541,855]].forEach(([x, t]) =>
    add(svg, 'line', { class: 'm-vol-y', x1: x + .5, x2: x + .5, y1: t, y2: 879 }));

  const price = seg(1440, 560, 3, '285,360 290,375 293,435 295,345 297,265 300,195 304,240 310,183 314,250 317,320 322,197 326,265 332,340 338,355 341,403 345,330 348,385 352,330 357,250 365,205 369,215 375,265 380,285 385,330 390,295 395,345 402,385 408,350 415,365 420,385 425,380 434,283 440,320 447,355 453,400 462,437 470,405 475,425 490,408 497,380 505,378 513,400 520,400 530,460 535,505 541,475');
  add(svg, 'polyline', { class: 'm-price', points: price.map(p => p[0].toFixed(1) + ',' + p[1].toFixed(1)).join(' ') });
}

drawMain();
drawVol();
drawMacd();
drawMini();
```
